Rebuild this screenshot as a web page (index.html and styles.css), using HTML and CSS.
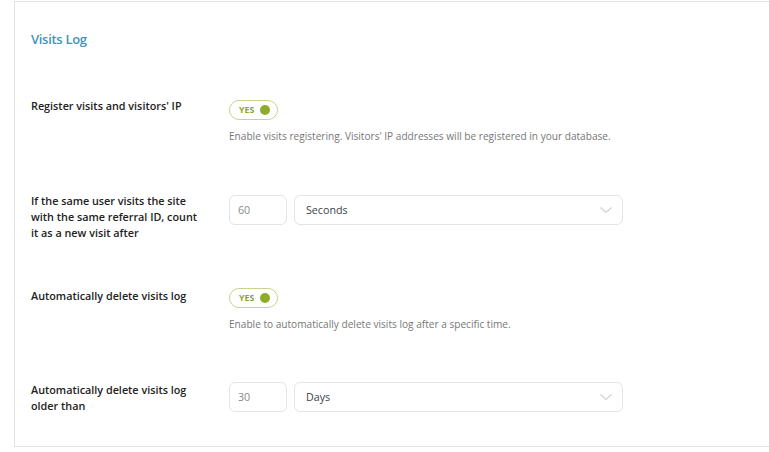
FILE: index.html
```html
<!DOCTYPE html>
<html lang="en">
<head>
<meta charset="utf-8">
<title>Visits Log</title>
<link rel="stylesheet" href="styles.css">
</head>
<body>
<div class="page">
  <section class="card">
    <h2 class="card-title">Visits Log</h2>

    <div class="row row-1">
      <div class="label">Register visits and visitors' IP</div>
      <div class="control">
        <span class="toggle"><span class="toggle-text">YES</span><span class="toggle-dot"></span></span>
        <p class="desc">Enable visits registering. Visitors' IP addresses will be registered in your database.</p>
      </div>
    </div>

    <div class="row row-2">
      <div class="label">If the same user visits the site with the same referral ID, count it as a new visit after</div>
      <div class="control inline">
        <span class="num">60</span>
        <span class="select">Seconds
          <svg class="chev" viewBox="0 0 12 6" width="12" height="6"><path d="M0.5 0.5 L6 5.5 L11.5 0.5" fill="none" stroke="#d0d0d0" stroke-width="1.1"/></svg>
        </span>
      </div>
    </div>

    <div class="row row-3">
      <div class="label">Automatically delete visits log</div>
      <div class="control">
        <span class="toggle"><span class="toggle-text">YES</span><span class="toggle-dot"></span></span>
        <p class="desc">Enable to automatically delete visits log after a specific time.</p>
      </div>
    </div>

    <div class="row row-4">
      <div class="label">Automatically delete visits log older than</div>
      <div class="control inline">
        <span class="num">30</span>
        <span class="select">Days
          <svg class="chev" viewBox="0 0 12 6" width="12" height="6"><path d="M0.5 0.5 L6 5.5 L11.5 0.5" fill="none" stroke="#d0d0d0" stroke-width="1.1"/></svg>
        </span>
      </div>
    </div>
  </section>
</div>
</body>
</html>
```

FILE: styles.css
```css
* { box-sizing: border-box; }
html, body { margin: 0; padding: 0; background: #ffffff; }
body { font-family: "Open Sans", "Noto Sans", sans-serif; color: #23282d; }

.page {
  padding: 1px 0 0 14px;
}

.card {
  border: 1px solid #e3e3e3;
  border-right: none;
  background: #fff;
  padding: 27px 0 0 16px;
  height: 446px;
}

.card-title {
  margin: 0;
  font-size: 13px;
  font-weight: 600;
  color: #3f93bc;
  line-height: 20px;
  letter-spacing: -0.3px;
}

.row {
  display: flex;
  align-items: flex-start;
}

.label {
  width: 198px;
  flex: none;
  font-size: 10.8px;
  font-weight: 600;
  line-height: 16px;
  padding-right: 28px;
  color: #222222;
}

.control { flex: none; }
.control.inline { display: flex; gap: 7px; }

.row-1 { margin-top: 49px; }
.row-2 { margin-top: 50px; }
.row-3 { margin-top: 47px; }
.row-4 { margin-top: 51px; }

.row-1 .toggle { margin-top: 2px; }
.row-2 .control { margin-top: 2px; }
.row-3 .toggle { margin-top: 0; }
.row-4 .control { margin-top: 0; }

.toggle {
  display: flex;
  align-items: center;
  width: 49px;
  height: 20px;
  border: 1px solid #c6d48f;
  border-radius: 10px;
  padding: 0 0 0 9px;
}
.toggle-text {
  font-size: 8.8px;
  font-weight: 700;
  color: #8aa52c;
  line-height: 10px;
}
.toggle-dot {
  width: 10px;
  height: 10px;
  border-radius: 50%;
  background: #8fab2b;
  margin-left: 6px;
}

.desc {
  margin: 9px 0 0;
  font-size: 10.1px;
  line-height: 14px;
  color: #777777;
}

.num, .select {
  display: flex;
  align-items: center;
  height: 30px;
  border: 1px solid #e4e4e4;
  border-radius: 6px;
  font-size: 10.7px;
  background: #fff;
}
.num {
  width: 58px;
  padding-left: 8px;
  color: #8a8a8a;
}
.select {
  width: 329px;
  padding: 0 10px 0 11px;
  color: #3c434a;
  justify-content: space-between;
}
.chev { display: block; }
```
